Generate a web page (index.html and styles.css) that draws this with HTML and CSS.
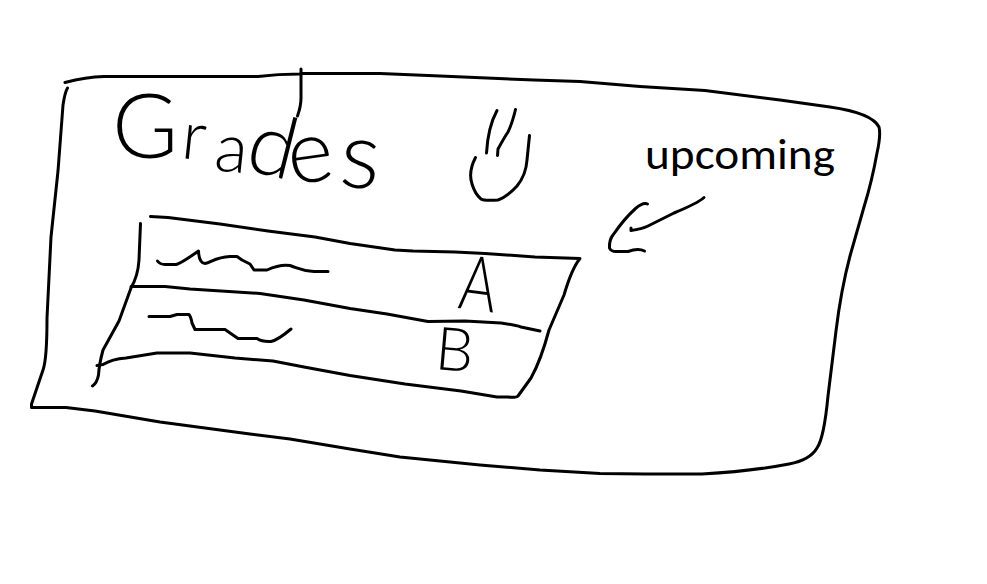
FILE: index.html
```html
<!DOCTYPE html>
<html lang="en">
<head>
<meta charset="utf-8">
<title>Grades</title>
<link rel="stylesheet" href="styles.css">
</head>
<body>
<svg class="board" viewBox="0 0 987 584" role="img" aria-label="Grades card sketch">
  <!-- card outline -->
  <g class="ink">
    <path d="M65 82.500Q86 77 104 76.500H258Q278 74 300 74L301.500 73.500H380L440 76L534 80L580 81.500L640 86.500L705 90.500L780 100L830 107Q872 113 879 127Q881 135 877 153Q872 181 864 207L850 256Q841 290 836 331L828 396Q824 438 817 448Q810 460 789 464Q753 471 702 474H645L600 473.500L540 470L480 465L400 457L350 449L290 439L250 434L205 428L160 422L95 411L66 407.500H31.500V404L43 370Q47 359 47 318L51 237L58 171L63 105Q65 92 67.500 88"/>
    <path d="M301 69V98Q301 106 297.500 116"/>
  </g>

  <text class="title"><tspan class="g" x="112" y="158">G</tspan><tspan class="r" x="180" y="158" rotate="6">r</tspan><tspan class="a" x="213" y="170" rotate="6">a</tspan><tspan class="d" x="243" y="169" rotate="14">d</tspan><tspan class="e" x="291" y="185" rotate="-8">e</tspan><tspan class="s" x="338" y="186" rotate="5">s</tspan></text>

  <!-- smiley -->
  <g class="ink">
    <path d="M497 110.500Q488 127 486.500 153"/>
    <path d="M515.500 109.500Q512 124 508 132Q504 138 498 149L497.500 155.500"/>
    <path d="M475.500 157.500Q468 172 472 184Q475 194 481 199Q484 201 498 200Q507 197 517 186Q526 175 527 160L529.500 135.500"/>
  </g>

  <!-- grade rows -->
  <g class="ink">
    <path d="M150.500 216.500L168 217.500L220 224L268 231L315 237L350 243.500L395 250L413 251L455 252L485 253.500L535 257L580 258.500Q572 268 564 295L549 330Q541 360 531 378L518 396Q516 398 508 397H497L461 391L405 384L350 375.500L304 367L273 361L235 358L190 353H157L126 358Q112 359 103 364.500L97 365.500"/>
    <path d="M140.500 223.500L139 260Q138 276 131 288L119 321L103 350Q99 365 98.500 375Q97 383 92.500 386"/>
    <path d="M131 286.500H165L190 289L260 293.500L304 300L350 308.500L387 314L428 321.500L465 321L501 323Q515 325 521 327L540 331"/>
    <path d="M157.500 261Q160 264.500 165 264.500H176Q180 264 198.500 251Q199 263 205 263.500C211 263 215 257 230 256.500H237L242 260L250 264L254 270H267Q280 264 290 265.500C300 269 302 271 314 271.500H325L328 271.500"/>
    <path d="M149 316.500H170L177 314.500H189Q191 317 192 323L195 329.500H225L238 338.500H257Q262 342 271 341.500Q278 340 291 329"/>
  </g>
  <text class="grade" transform="translate(457 308) rotate(7) scale(.74 1)">A</text>
  <text class="grade grade-b" transform="translate(434 369) rotate(5)">B</text>

  <!-- annotation -->
  <text class="note" x="645" y="168.500" textLength="190" lengthAdjust="spacingAndGlyphs">upcoming</text>
  <g class="ink">
    <path d="M704 197.500Q698 203 674 213L648 226Q642 229 631 230.500V228"/>
    <path d="M647.500 204Q643 202 635 209Q624 219 613 235Q609 240 609.500 248Q611 251.500 616 251.500H628Q638 248 644.500 251"/>
  </g>
</svg>
</body>
</html>
```
FILE: styles.css
```css
body {
  margin: 0;
  background: #fff;
}

.board {
  display: block;
  width: 987px;
  height: 584px;
  font-family: Lato, "Open Sans", sans-serif;
}

.ink {
  fill: none;
  stroke: #000;
  stroke-width: 3;
  stroke-linecap: round;
  stroke-linejoin: round;
}

.title,
.grade {
  fill: #000;
  font-weight: 300;
}

.title .g { font-size: 90px; }
.title .r { font-size: 68px; }
.title .a { font-size: 68px; }
.title .d { font-size: 86px; }
.title .e { font-size: 88px; }
.title .s { font-size: 94px; }

.grade { font-size: 76px; }
.grade-b { font-size: 60px; }

.note {
  fill: #000;
  font-family: Carlito, Lato, sans-serif;
  font-size: 43px;
}
```
